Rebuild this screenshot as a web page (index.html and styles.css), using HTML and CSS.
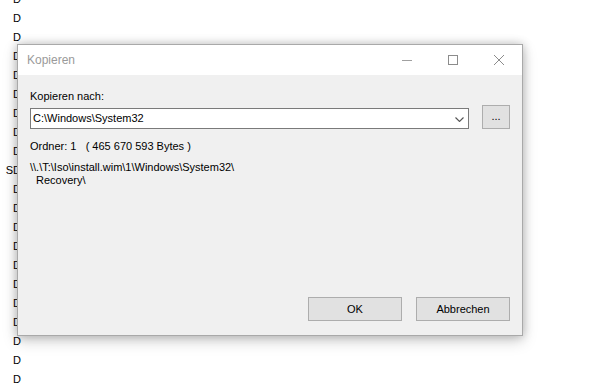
FILE: index.html
```html
<!DOCTYPE html>
<html lang="de">
<head>
<meta charset="utf-8">
<title>Kopieren</title>
<link rel="stylesheet" href="styles.css">
</head>
<body>
<div class="list">
  <div class="item">D</div>
  <div class="item">D</div>
  <div class="item">D</div>
  <div class="item">D</div>
  <div class="item">D</div>
  <div class="item">D</div>
  <div class="item">D</div>
  <div class="item">D</div>
  <div class="item">D</div>
  <div class="item">SD</div>
  <div class="item">D</div>
  <div class="item">D</div>
  <div class="item">D</div>
  <div class="item">D</div>
  <div class="item">D</div>
  <div class="item">D</div>
  <div class="item">D</div>
  <div class="item">D</div>
  <div class="item">D</div>
  <div class="item">D</div>
  <div class="item">D</div>
</div>

<div class="dialog">
  <div class="titlebar">
    <div class="title">Kopieren</div>
    <div class="caption-btns">
      <div class="cb">
        <svg width="10" height="10" viewBox="0 0 10 10"><line x1="0" y1="5.5" x2="10" y2="5.5" stroke="#a0a0a0" stroke-width="1"/></svg>
      </div>
      <div class="cb">
        <svg width="10" height="10" viewBox="0 0 10 10"><rect x="0.5" y="0.5" width="9" height="9" fill="none" stroke="#8c8c8c" stroke-width="1"/></svg>
      </div>
      <div class="cb">
        <svg width="10" height="10" viewBox="0 0 10 10"><path d="M0 0 L10 10 M10 0 L0 10" stroke="#8c8c8c" stroke-width="1"/></svg>
      </div>
    </div>
  </div>
  <div class="body">
    <div class="label">Kopieren nach:</div>
    <div class="combo-row">
      <div class="combo">
        <span class="combo-text">C:\Windows\System32</span>
        <svg class="chev" width="9" height="5" viewBox="0 0 9 5"><polyline points="0.5,0.5 4.5,4.5 8.5,0.5" fill="none" stroke="#555" stroke-width="1.1"/></svg>
      </div>
      <div class="btn browse">...</div>
    </div>
    <div class="info">Ordner: 1   ( 465 670 593 Bytes )</div>
    <div class="path">\\.\T:\Iso\install.wim\1\Windows\System32\<br><span class="indent">Recovery\</span></div>
    <div class="actions">
      <div class="btn action">OK</div>
      <div class="btn action">Abbrechen</div>
    </div>
  </div>
</div>
</body>
</html>
```
FILE: styles.css
```css
html, body {
  margin: 0;
  padding: 0;
}
body {
  width: 606px;
  height: 387px;
  overflow: hidden;
  background: #ffffff;
  font-family: "Liberation Sans", Arial, sans-serif;
  font-size: 11px;
  color: #000;
  position: relative;
}
.list {
  display: flex;
  flex-direction: column;
  width: 21px;
  margin-top: -10px;
  text-align: right;
}
.item {
  height: 19px;
  line-height: 19px;
  font-size: 11px;
  color: #000;
}
.dialog {
  position: absolute;
  left: 17px;
  top: 44px;
  width: 506px;
  height: 292px;
  box-sizing: border-box;
  border: 1px solid #a9a9a9;
  background: #f0f0f0;
  display: flex;
  flex-direction: column;
  box-shadow: 0 0 9px rgba(0,0,0,0.22), 0 5px 14px rgba(0,0,0,0.18);
}
.titlebar {
  height: 30px;
  background: #ffffff;
  display: flex;
  align-items: center;
}
.title {
  flex: 1;
  padding-left: 9px;
  font-size: 12px;
  line-height: 30px;
  color: #9a9a9a;
}
.caption-btns {
  display: flex;
}
.cb {
  width: 46px;
  height: 30px;
  display: flex;
  align-items: center;
  justify-content: center;
}
.cb svg {
  display: block;
}
.body {
  flex: 1;
  display: flex;
  flex-direction: column;
  padding: 15px 12px 14px 12px;
}
.label {
  line-height: 13px;
}
.combo-row {
  margin-top: 2px;
  display: flex;
  align-items: flex-end;
  gap: 13px;
}
.combo {
  flex: 1;
  height: 21px;
  box-sizing: border-box;
  border: 1px solid #7a7a7a;
  background: #fff;
  display: flex;
  align-items: center;
  padding: 0 4px 0 2px;
}
.combo-text {
  flex: 1;
  line-height: 19px;
}
.chev {
  display: block;
  margin-top: 1px;
}
.btn {
  box-sizing: border-box;
  background: #e1e1e1;
  border: 1px solid #adadad;
  display: flex;
  align-items: center;
  justify-content: center;
  height: 24px;
}
.browse {
  width: 28px;
  padding-bottom: 2px;
}
.info {
  margin-top: 11px;
  line-height: 13px;
  white-space: pre;
}
.path {
  margin-top: 8px;
  line-height: 13px;
}
.indent {
  padding-left: 6px;
}
.actions {
  margin-top: auto;
  display: flex;
  justify-content: flex-end;
  gap: 14px;
}
.action {
  width: 94px;
}
```
